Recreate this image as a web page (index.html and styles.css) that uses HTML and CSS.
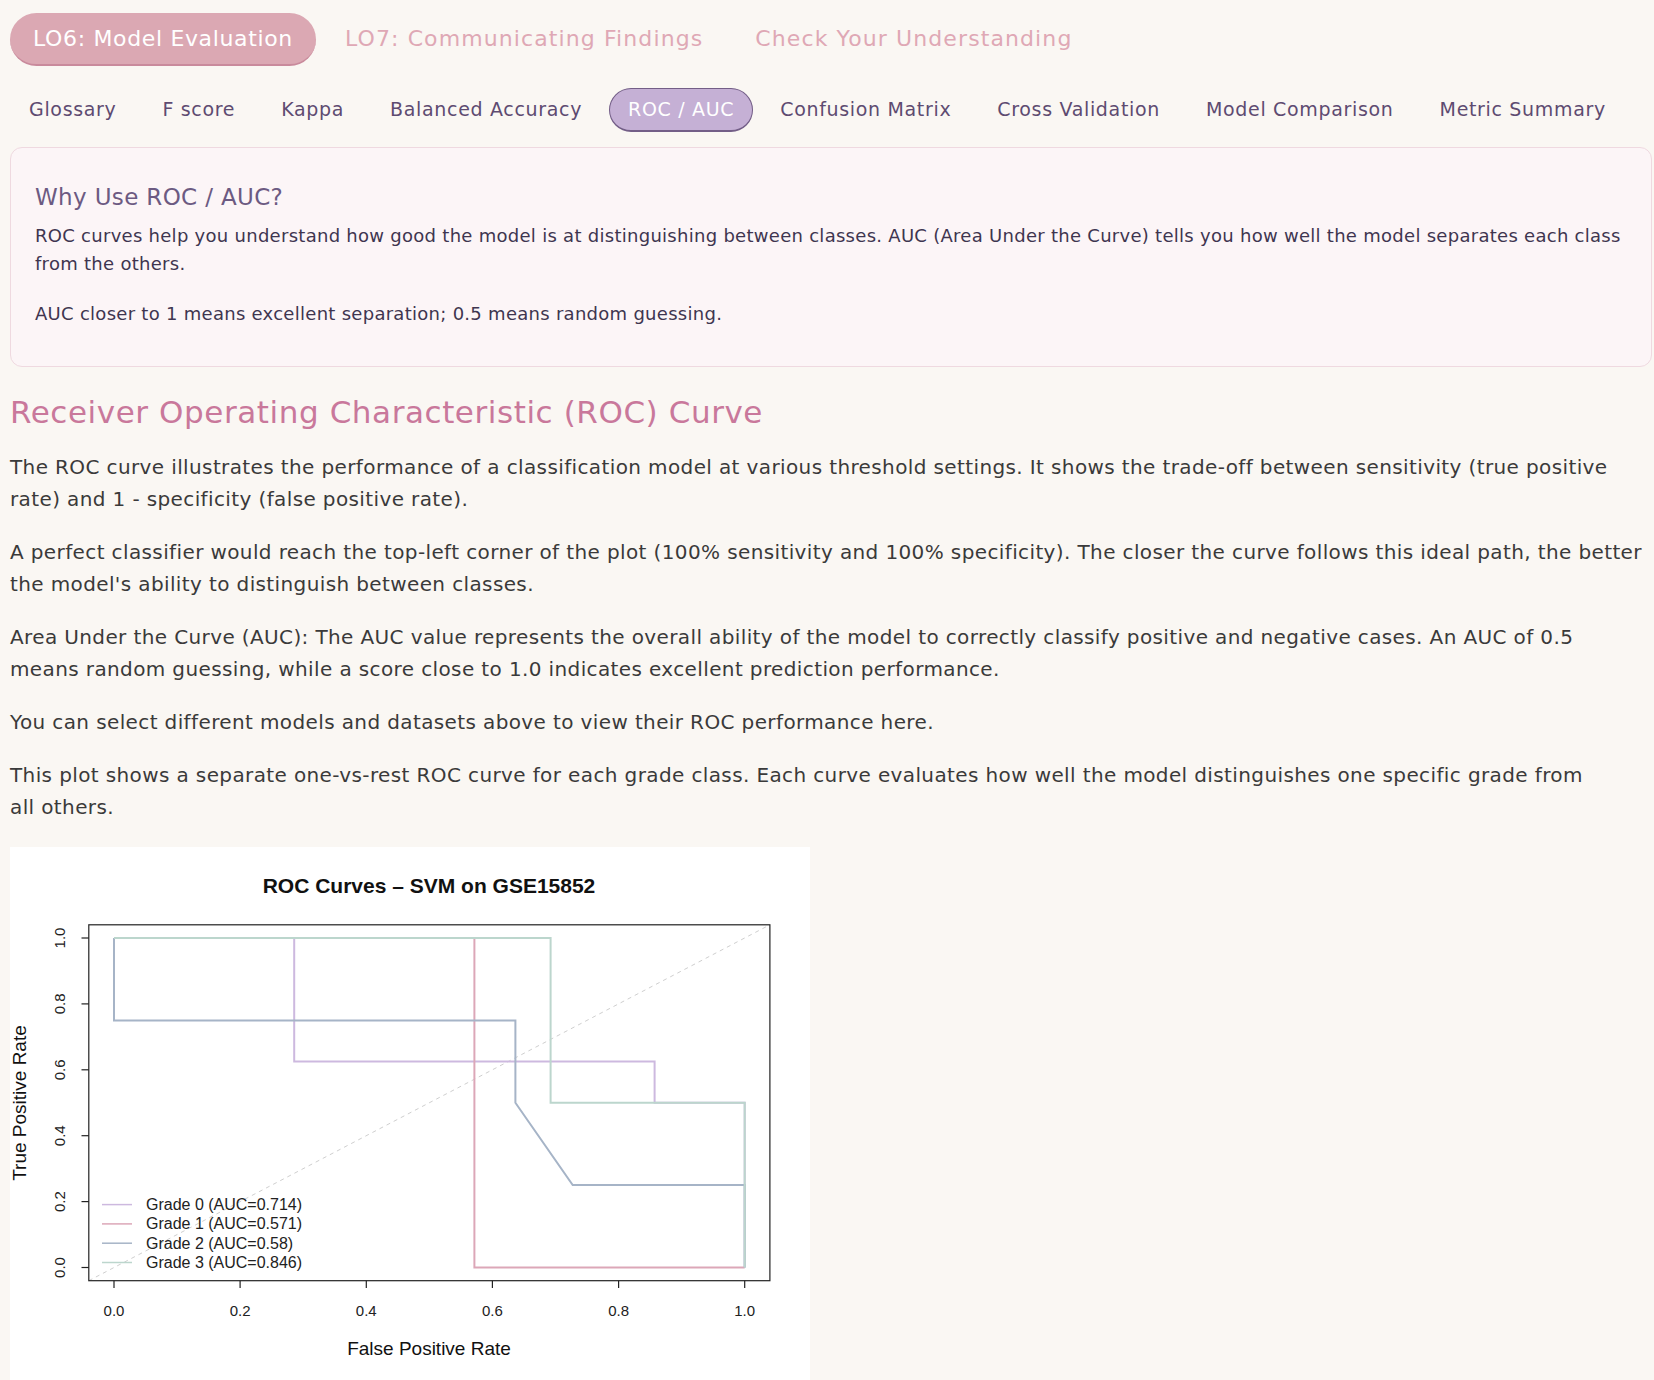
FILE: index.html
```html
<!DOCTYPE html>
<html lang="en">
<head>
<meta charset="utf-8">
<title>LO6: Model Evaluation – ROC / AUC</title>
<link rel="stylesheet" href="styles.css">
</head>
<body>
<div class="page">
  <nav class="main-tabs">
    <a class="main-tab active">LO6: Model Evaluation</a>
    <a class="main-tab">LO7: Communicating Findings</a>
    <a class="main-tab">Check Your Understanding</a>
  </nav>
  <nav class="sub-tabs">
    <a class="sub-tab">Glossary</a>
    <a class="sub-tab">F score</a>
    <a class="sub-tab">Kappa</a>
    <a class="sub-tab">Balanced Accuracy</a>
    <a class="sub-tab active">ROC / AUC</a>
    <a class="sub-tab">Confusion Matrix</a>
    <a class="sub-tab">Cross Validation</a>
    <a class="sub-tab">Model Comparison</a>
    <a class="sub-tab">Metric Summary</a>
  </nav>

  <section class="info-box">
    <h3 class="info-title">Why Use ROC / AUC?</h3>
    <p class="info-text">ROC curves help you understand how good the model is at distinguishing between classes. AUC (Area Under the Curve) tells you how well the model separates each class<br>from the others.</p>
    <p class="info-text">AUC closer to 1 means excellent separation; 0.5 means random guessing.</p>
  </section>

  <h2 class="section-title">Receiver Operating Characteristic (ROC) Curve</h2>
  <p class="body-text">The ROC curve illustrates the performance of a classification model at various threshold settings. It shows the trade-off between sensitivity (true positive<br>rate) and 1 - specificity (false positive rate).</p>
  <p class="body-text">A perfect classifier would reach the top-left corner of the plot (100% sensitivity and 100% specificity). The closer the curve follows this ideal path, the better<br>the model's ability to distinguish between classes.</p>
  <p class="body-text">Area Under the Curve (AUC): The AUC value represents the overall ability of the model to correctly classify positive and negative cases. An AUC of 0.5<br>means random guessing, while a score close to 1.0 indicates excellent prediction performance.</p>
  <p class="body-text">You can select different models and datasets above to view their ROC performance here.</p>
  <p class="body-text">This plot shows a separate one-vs-rest ROC curve for each grade class. Each curve evaluates how well the model distinguishes one specific grade from<br>all others.</p>

  <div class="chart">
    <svg class="chart-svg" width="800" height="560" viewBox="0 0 800 560" xmlns="http://www.w3.org/2000/svg">
      <rect x="0" y="0" width="800" height="560" fill="#ffffff"/>
      <text class="plot-title" x="419" y="46" text-anchor="middle">ROC Curves – SVM on GSE15852</text>

      <line x1="78.8" y1="433.7" x2="759.9" y2="77.8" stroke="#cfcfcf" stroke-width="1" stroke-dasharray="4 4"/>

      <polyline fill="none" stroke="#cdb9df" stroke-width="2" points="104,91 284.2,91 284.2,214.6 644.6,214.6 644.6,255.8 734.7,255.8 734.7,420.5"/>
      <polyline fill="none" stroke="#dca7b8" stroke-width="2" points="104,91 464.4,91 464.4,420.5 734.7,420.5"/>
      <polyline fill="none" stroke="#a6b4c7" stroke-width="2" points="104,91 104,173.4 505.4,173.4 505.4,255.8 562.7,338.1 734.7,338.1 734.7,420.5"/>
      <polyline fill="none" stroke="#bcd6cd" stroke-width="2" points="104,91 540.6,91 540.6,255.8 734.7,255.8 734.7,420.5"/>

      <rect x="78.8" y="77.8" width="681.1" height="355.9" fill="none" stroke="#222" stroke-width="1.2"/>

      <g stroke="#222" stroke-width="1.2">
        <line x1="104" y1="433.7" x2="104" y2="441"/>
        <line x1="230.1" y1="433.7" x2="230.1" y2="441"/>
        <line x1="356.3" y1="433.7" x2="356.3" y2="441"/>
        <line x1="482.4" y1="433.7" x2="482.4" y2="441"/>
        <line x1="608.6" y1="433.7" x2="608.6" y2="441"/>
        <line x1="734.7" y1="433.7" x2="734.7" y2="441"/>
      </g>
      <g class="tick-label" text-anchor="middle">
        <text x="104" y="469">0.0</text>
        <text x="230.1" y="469">0.2</text>
        <text x="356.3" y="469">0.4</text>
        <text x="482.4" y="469">0.6</text>
        <text x="608.6" y="469">0.8</text>
        <text x="734.7" y="469">1.0</text>
      </g>

      <g stroke="#222" stroke-width="1.2">
        <line x1="78.8" y1="420.5" x2="71.5" y2="420.5"/>
        <line x1="78.8" y1="354.6" x2="71.5" y2="354.6"/>
        <line x1="78.8" y1="288.7" x2="71.5" y2="288.7"/>
        <line x1="78.8" y1="222.8" x2="71.5" y2="222.8"/>
        <line x1="78.8" y1="156.9" x2="71.5" y2="156.9"/>
        <line x1="78.8" y1="91" x2="71.5" y2="91"/>
      </g>
      <g class="tick-label" text-anchor="middle">
        <text x="55" y="420.5" transform="rotate(-90 55 420.5)">0.0</text>
        <text x="55" y="354.6" transform="rotate(-90 55 354.6)">0.2</text>
        <text x="55" y="288.7" transform="rotate(-90 55 288.7)">0.4</text>
        <text x="55" y="222.8" transform="rotate(-90 55 222.8)">0.6</text>
        <text x="55" y="156.9" transform="rotate(-90 55 156.9)">0.8</text>
        <text x="55" y="91" transform="rotate(-90 55 91)">1.0</text>
      </g>

      <text class="axis-label" x="419" y="508" text-anchor="middle">False Positive Rate</text>
      <text class="axis-label" x="16" y="256" text-anchor="middle" transform="rotate(-90 16 256)">True Positive Rate</text>

      <g stroke-width="1.5">
        <line x1="92" y1="357.6" x2="122" y2="357.6" stroke="#cdb9df"/>
        <line x1="92" y1="376.9" x2="122" y2="376.9" stroke="#dca7b8"/>
        <line x1="92" y1="396.2" x2="122" y2="396.2" stroke="#a6b4c7"/>
        <line x1="92" y1="415.5" x2="122" y2="415.5" stroke="#bcd6cd"/>
      </g>
      <g class="legend-label">
        <text x="136" y="363">Grade 0 (AUC=0.714)</text>
        <text x="136" y="382.3">Grade 1 (AUC=0.571)</text>
        <text x="136" y="401.6">Grade 2 (AUC=0.58)</text>
        <text x="136" y="420.9">Grade 3 (AUC=0.846)</text>
      </g>
    </svg>
  </div>
</div>
</body>
</html>
```

FILE: styles.css
```css
html, body {
  margin: 0;
  padding: 0;
  background: #faf7f3;
}

body {
  font-family: "DejaVu Sans", "Open Sans", sans-serif;
  color: #3a3a3a;
}

.page {
  padding: 13px 2px 0 10px;
}

/* main tabs */
.main-tabs {
  display: flex;
  gap: 6px;
  align-items: center;
}

.main-tab {
  display: block;
  padding: 10px 23px;
  line-height: 31px;
  font-size: 22px;
  letter-spacing: 1.1px;
  color: #dfa8b5;
  border-radius: 30px;
  border-bottom: 2px solid transparent;
  white-space: nowrap;
}

.main-tab.active {
  background: #dba8b3;
  color: #ffffff;
  letter-spacing: 0.65px;
  border-bottom-color: #c98a9c;
}

/* sub tabs */
.sub-tabs {
  display: flex;
  gap: 8px;
  align-items: center;
  margin-top: 22px;
}

.sub-tab {
  display: block;
  padding: 6px 18px;
  line-height: 29px;
  font-size: 19px;
  letter-spacing: 0.67px;
  color: #5e4b71;
  border: 1px solid transparent;
  border-bottom-width: 2px;
  border-radius: 24px;
  white-space: nowrap;
}

.sub-tab.active {
  background: #c5b0d5;
  color: #ffffff;
  border-color: #735e87;
}

/* info box */
.info-box {
  margin-top: 15px;
  background: #fcf5f7;
  border: 1px solid #efd9e0;
  border-radius: 12px;
  padding: 24px 24px 38px 24px;
}

.info-title {
  margin: 10px 0 9px 0;
  font-size: 23px;
  line-height: 31px;
  letter-spacing: 0.35px;
  font-weight: normal;
  color: #6c5a82;
}

.info-text {
  margin: 0 0 22px 0;
  font-size: 18px;
  line-height: 28px;
  letter-spacing: 0.28px;
  color: #3f3550;
}

.info-text:last-child {
  margin-bottom: 0;
}

/* main content */
.section-title {
  margin: 25px 0 19px 0;
  font-size: 31px;
  line-height: 40px;
  letter-spacing: 0.57px;
  font-weight: normal;
  color: #c9789b;
}

.body-text {
  margin: 0 0 21px 0;
  font-size: 20px;
  line-height: 32px;
  letter-spacing: 0.38px;
  color: #3a3a3a;
}

.chart {
  margin-top: 24px;
  width: 800px;
}

.chart-svg {
  display: block;
}

.plot-title {
  font-family: "Liberation Sans", Arial, sans-serif;
  font-size: 21px;
  font-weight: 700;
  fill: #111;
}

.tick-label {
  font-family: "Liberation Sans", Arial, sans-serif;
  font-size: 15px;
  fill: #222;
}

.axis-label {
  font-family: "Liberation Sans", Arial, sans-serif;
  font-size: 19px;
  fill: #111;
}

.legend-label {
  font-family: "Liberation Sans", Arial, sans-serif;
  font-size: 16px;
  fill: #222;
}
```
